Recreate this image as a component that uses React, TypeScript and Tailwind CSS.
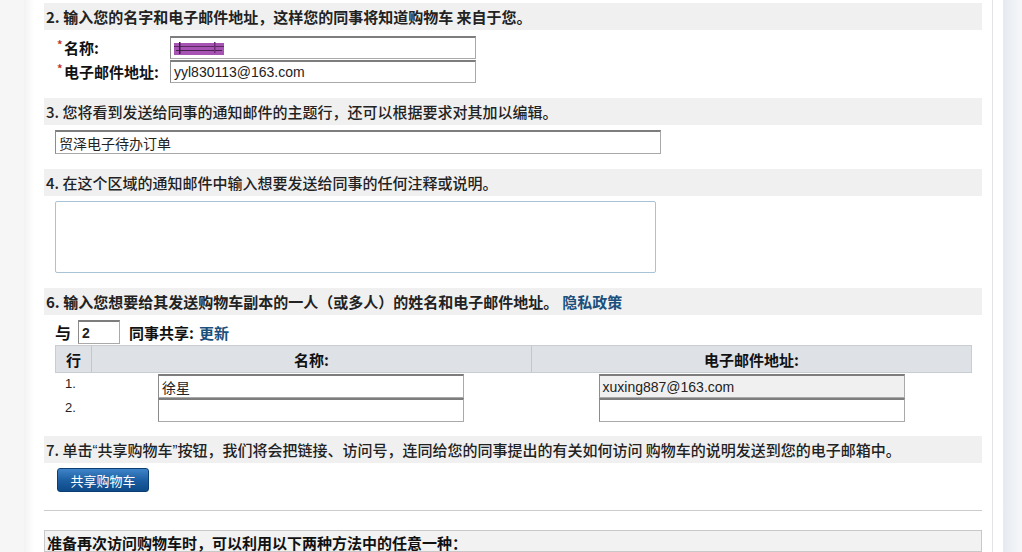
import React from "react";

const cjk = { fontFamily: '"Noto Sans CJK SC", "Liberation Sans", sans-serif' };
const arial = { fontFamily: '"Liberation Sans", "Noto Sans CJK SC", sans-serif' };

function Heading({ children, className = "" }: { children: React.ReactNode; className?: string }) {
  return (
    <div
      className={`h-[27px] shrink-0 bg-[#f0f0f0] flex items-center pl-[2px] text-[15px] leading-none text-[#222] whitespace-nowrap ${className}`}
      style={cjk}
    >
      {children}
    </div>
  );
}

function Input({ value = "", className = "", children }: { value?: string; className?: string; children?: React.ReactNode }) {
  return (
    <div
      className={`h-[24px] shrink-0 overflow-hidden leading-none border border-[#a9a9a9] border-t-2 border-t-[#7d7d7d] border-l-[#8c8c8c] flex items-center pl-[3px] text-[14px] text-[#222] ${className}`}
      style={arial}
    >
      {children ?? value}
    </div>
  );
}

export default function App() {
  return (
    <div className="w-[1022px] h-[552px] overflow-hidden flex bg-white" style={cjk}>
      {/* left gutter */}
      <div className="w-[34px] shrink-0 flex">
        <div className="w-[24px] bg-[#f6f6f6]" />
        <div className="w-[10px] bg-gradient-to-r from-[#f3f3f3] to-white" />
      </div>

      {/* main */}
      <div className="w-[959px] shrink-0 border-r border-[#e4e4e4] pl-[10px] pr-[10px] pt-[3px] flex flex-col">
        {/* section 2 */}
        <Heading className="font-bold">2. 输入您的名字和电子邮件地址，这样您的同事将知道购物车 来自于您。</Heading>
        <div className="pl-[11px] pt-[6px] flex flex-col gap-[1px]">
          <div className="flex items-center h-[23px]">
            <div className="w-[115px] flex items-center h-[23px] leading-none text-[15px] font-bold text-[#111]">
              <span className="text-[#c0392b] text-[11px] w-[9px] pl-[2px] self-start pt-[3px]">*</span>
              <span>名称:</span>
            </div>
            <Input className="w-[306px] !h-[23px]">
              <svg width="50" height="15" viewBox="0 0 50 15">
                <rect x="0" y="2" width="50" height="12" fill="#a653b4" />
                <rect x="0" y="5" width="50" height="1" fill="#5a2a60" />
                <rect x="2" y="9" width="46" height="1" fill="#4a2150" />
                <rect x="5" y="1" width="1.5" height="12" fill="#3a1a40" />
                <rect x="40" y="1" width="1.5" height="11" fill="#6a3070" />
              </svg>
            </Input>
          </div>
          <div className="flex items-center h-[23px]">
            <div className="w-[115px] flex items-center h-[23px] leading-none text-[15px] font-bold text-[#111]">
              <span className="text-[#c0392b] text-[11px] w-[9px] pl-[2px] self-start pt-[3px]">*</span>
              <span>电子邮件地址:</span>
            </div>
            <Input className="w-[306px] !h-[23px]" value="yyl830113@163.com" />
          </div>
        </div>

        {/* section 3 */}
        <Heading className="font-medium mt-[15px]">3. 您将看到发送给同事的通知邮件的主题行，还可以根据要求对其加以编辑。</Heading>
        <div className="pl-[11px] pt-[5px]">
          <Input className="w-[606px]">
            <span style={cjk} className="text-[14px] leading-none">贸泽电子待办订单</span>
          </Input>
        </div>

        {/* section 4 */}
        <Heading className="font-medium mt-[15px]">4. 在这个区域的通知邮件中输入想要发送给同事的任何注释或说明。</Heading>
        <div className="pl-[11px] pt-[5px]">
          <div className="w-[601px] h-[72px] border border-[#a9c3d6] rounded-[2px] bg-white" />
        </div>

        {/* section 6 */}
        <Heading className="font-bold mt-[15px]">
          6. 输入您想要给其发送购物车副本的一人（或多人）的姓名和电子邮件地址。
          <span className="text-[#1b4f7c] ml-[4px]">隐私政策</span>
        </Heading>
        <div className="pl-[11px] pt-[5px]">
          <div className="flex items-center h-[24px] leading-none font-bold text-[#111]">
            <span className="text-[16px] w-[23px]">与</span>
            <Input className="w-[42px]" value="2" />
            <span className="text-[15px] ml-[9px]">同事共享:</span>
            <span className="text-[15px] ml-[5px] text-[#1b4f7c]">更新</span>
          </div>
          <div className="w-[917px] mt-[1px]">
            <div className="flex h-[28px] leading-none bg-[#dee2e7] border border-[#c9ccd0] font-bold text-[15px] text-[#111]">
              <div className="w-[36px] border-r border-[#c3c7cc] flex items-center justify-center">行</div>
              <div className="w-[440px] border-r border-[#c3c7cc] flex items-center justify-center">名称:</div>
              <div className="flex-1 flex items-center justify-center">电子邮件地址:</div>
            </div>
            <div className="flex h-[25px] leading-none" style={arial}>
              <div className="w-[36px] text-[13px] text-[#222] pl-[10px] pt-[4px]">1.</div>
              <div className="w-[440px] flex justify-center pt-[1px]">
                <Input className="w-[306px]">
                  <span style={cjk} className="text-[14px] leading-none">徐星</span>
                </Input>
              </div>
              <div className="flex-1 flex justify-center pt-[1px]">
                <Input className="w-[306px] bg-[#f0f0f0]" value="xuxing887@163.com" />
              </div>
            </div>
            <div className="flex h-[24px] leading-none" style={arial}>
              <div className="w-[36px] text-[13px] text-[#222] pl-[10px] pt-[3px]">2.</div>
              <div className="w-[440px] flex justify-center">
                <Input className="w-[306px]" />
              </div>
              <div className="flex-1 flex justify-center">
                <Input className="w-[306px]" />
              </div>
            </div>
          </div>
        </div>

        {/* section 7 */}
        <Heading className="font-medium mt-[14px]">
          7. 单击<span style={arial}>“</span>共享购物车<span style={arial}>”</span>按钮，我们将会把链接、访问号，连同给您的同事提出的有关如何访问 购物车的说明发送到您的电子邮箱中。
        </Heading>
        <div className="pl-[13px] pt-[5px]">
          <button
            className="w-[92px] h-[24px] rounded-[3px] border border-[#0b3f74] bg-gradient-to-b from-[#3f85c8] via-[#1d5fa3] to-[#0c4a88] text-white text-[13px] leading-none flex items-center justify-center"
            style={cjk}
          >
            共享购物车
          </button>
        </div>

        <div className="mt-[18px] border-t border-[#cccccc]" />

        <div className="mt-[19px] border border-[#c8c8c8] bg-[#f2f2f2] h-[40px] pl-[2px] pt-[4px] leading-none font-bold text-[15px] text-[#111] whitespace-nowrap">
          准备再次访问购物车时，可以利用以下两种方法中的任意一种：
        </div>
      </div>

      {/* right gutter */}
      <div className="w-[10px] shrink-0 bg-white" />
      <div className="flex-1 bg-gradient-to-r from-[#e6eaf1] to-[#f6f7f9]" />
    </div>
  );
}
